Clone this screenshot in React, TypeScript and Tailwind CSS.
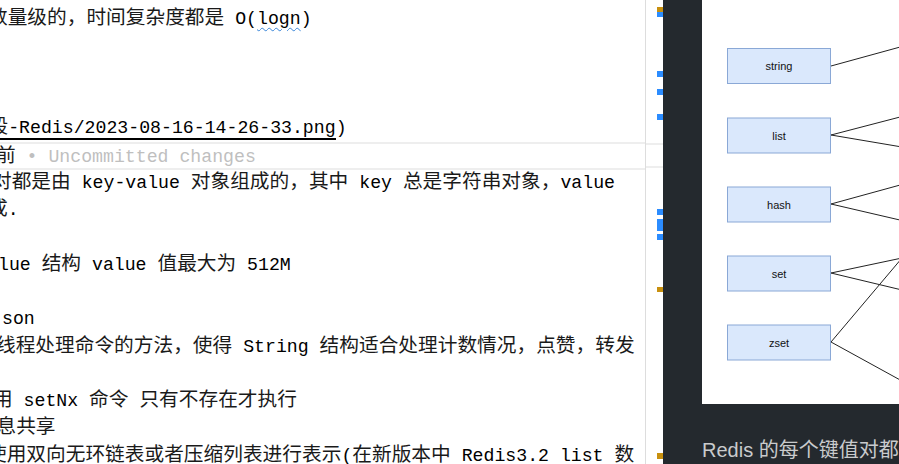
import type { ReactNode } from 'react'

const CJK = "font-['Noto_Sans_CJK_SC',sans-serif] text-[19.7px] leading-none text-[#1a1a1a]"

// split a string into latin (mono) and CJK runs, each CJK run gets its own font
const runs = (text: string): ReactNode[] =>
  text.split(/([^\x00-\x7f\u2022]+)/).map((part, i) => {
    if (part === '') return null
    return i % 2 === 1 ? (
      <span key={i} className={CJK}>
        {part}
      </span>
    ) : (
      <span key={i}>{part}</span>
    )
  })

type Line = { offset?: string; content?: ReactNode; current?: boolean }

const lines: Line[] = [
  {
    offset: '-ml-[12px]',
    content: (
      <>
        {runs('数量级的，时间复杂度都是 O(')}
        <span className="underline decoration-wavy decoration-[#3b86d8] decoration-1 underline-offset-[3px]">logn</span>
        {')'}
      </>
    ),
  },
  {},
  {},
  {},
  {
    offset: '-ml-[11.5px]',
    content: (
      <>
        <span className="border-b-2 border-black">{runs('段-Redis/2023-08-16-14-26-33.png')}</span>
        {')'}
      </>
    ),
  },
  {
    offset: '-ml-[4px]',
    current: true,
    content: <span className="text-[#bfbfbf]">{runs('前 • Uncommitted changes')}</span>,
  },
  { offset: '-ml-[8px]', content: runs('对都是由 key-value 对象组成的，其中 key 总是字符串对象，value') },
  { offset: '-ml-[12px]', content: runs('成.') },
  {},
  { offset: '-ml-[2px]', content: runs('lue 结构 value 值最大为 512M') },
  {},
  { offset: 'ml-[2px]', content: runs('son') },
  { offset: '-ml-[4px]', content: runs('线程处理命令的方法，使得 String 结构适合处理计数情况，点赞，转发') },
  {},
  { offset: '-ml-[7px]', content: runs('用 setNx 命令 只有不存在才执行') },
  { offset: '-ml-[3.5px]', content: runs('息共享') },
  { offset: '-ml-[13px]', content: runs('使用双向无环链表或者压缩列表进行表示(在新版本中 Redis3.2 list 数') },
]

const markers = [
  { top: 'top-[7px]', h: 'h-[5px]', c: 'bg-[#c8900f]' },
  { top: 'top-[12px]', h: 'h-[5px]', c: 'bg-[#2b8cff]' },
  { top: 'top-[71px]', h: 'h-[6px]', c: 'bg-[#2b8cff]' },
  { top: 'top-[89px]', h: 'h-[6px]', c: 'bg-[#2b8cff]' },
  { top: 'top-[114px]', h: 'h-[6px]', c: 'bg-[#2b8cff]' },
  { top: 'top-[209px]', h: 'h-[6px]', c: 'bg-[#2b8cff]' },
  { top: 'top-[219px]', h: 'h-[12px]', c: 'bg-[#2b8cff]' },
  { top: 'top-[234px]', h: 'h-[6px]', c: 'bg-[#2b8cff]' },
  { top: 'top-[287px]', h: 'h-[5px]', c: 'bg-[#c8900f]' },
  { top: 'top-[453px]', h: 'h-[6px]', c: 'bg-[#c8900f]' },
]

const boxes = [
  { label: 'string', y: 48 },
  { label: 'list', y: 117.5 },
  { label: 'hash', y: 186.5 },
  { label: 'set', y: 255.5 },
  { label: 'zset', y: 324.5 },
]

// edges leave the right side of each box and run off the picture
const edges: [number, number, number][] = [
  [66, 200, 46.5],
  [135, 200, 116.5],
  [135, 200, 147],
  [204, 200, 184.5],
  [204, 200, 220.5],
  [273, 200, 258],
  [273, 200, 290],
  [342, 200, 258],
  [342, 200, 381],
]

const Diagram = () => (
  <svg width="197" height="404" viewBox="0 0 197 404" className="block">
    {edges.map(([y1, x2, y2], i) => (
      <line key={i} x1="129" y1={y1} x2={x2} y2={y2} stroke="#222" strokeWidth="1" />
    ))}
    {boxes.map((b) => (
      <g key={b.label}>
        <rect x="25.5" y={b.y + 0.5} width="103" height="35" fill="#dae8fc" stroke="#8aa8d6" strokeWidth="1" />
        <text
          x="77"
          y={b.y + 22}
          textAnchor="middle"
          fontSize="11"
          fontFamily="Liberation Sans, Arial, sans-serif"
          fill="#111"
        >
          {b.label}
        </text>
      </g>
    ))}
  </svg>
)

export default function App() {
  return (
    <div className="flex h-[464px] w-[899px] overflow-hidden bg-white">
      {/* editor */}
      <div className="h-full w-[645px] shrink-0 overflow-hidden bg-white pt-[6px] font-['Liberation_Mono',monospace] text-[18.2px] leading-[27.3px] text-black">
        {lines.map((line, i) => (
          <div
            key={i}
            className={
              line.current
                ? 'h-[27.3px] whitespace-pre border-y-2 border-[#eeeeee] leading-[23.3px]'
                : 'h-[27.3px] whitespace-pre'
            }
          >
            <div className={line.offset}>{line.content}</div>
          </div>
        ))}
      </div>

      {/* overview ruler */}
      <div className="relative h-full w-[18px] shrink-0 border-l border-[#dddddd] bg-white">
        <div className="absolute left-0 right-0 top-[142.7px] h-[2px] bg-[#eeeeee]" />
        <div className="absolute left-0 right-0 top-[166px] h-[2px] bg-[#eeeeee]" />
        {markers.map((m, i) => (
          <div key={i} className={`absolute right-0 w-[6px] ${m.top} ${m.h} ${m.c}`} />
        ))}
      </div>

      {/* markdown preview */}
      <div className="h-full flex-1 overflow-hidden bg-[#24292e] pl-[39px]">
        <div className="h-[404px] overflow-hidden bg-white">
          <Diagram />
        </div>
        <p className="mt-[36px] whitespace-nowrap font-['Liberation_Sans','Noto_Sans_CJK_SC',sans-serif] text-[20px] leading-none text-[#c9cbcd]">
          Redis 的每个键值对都是由 key-value 对象组成的
        </p>
      </div>
    </div>
  )
}
